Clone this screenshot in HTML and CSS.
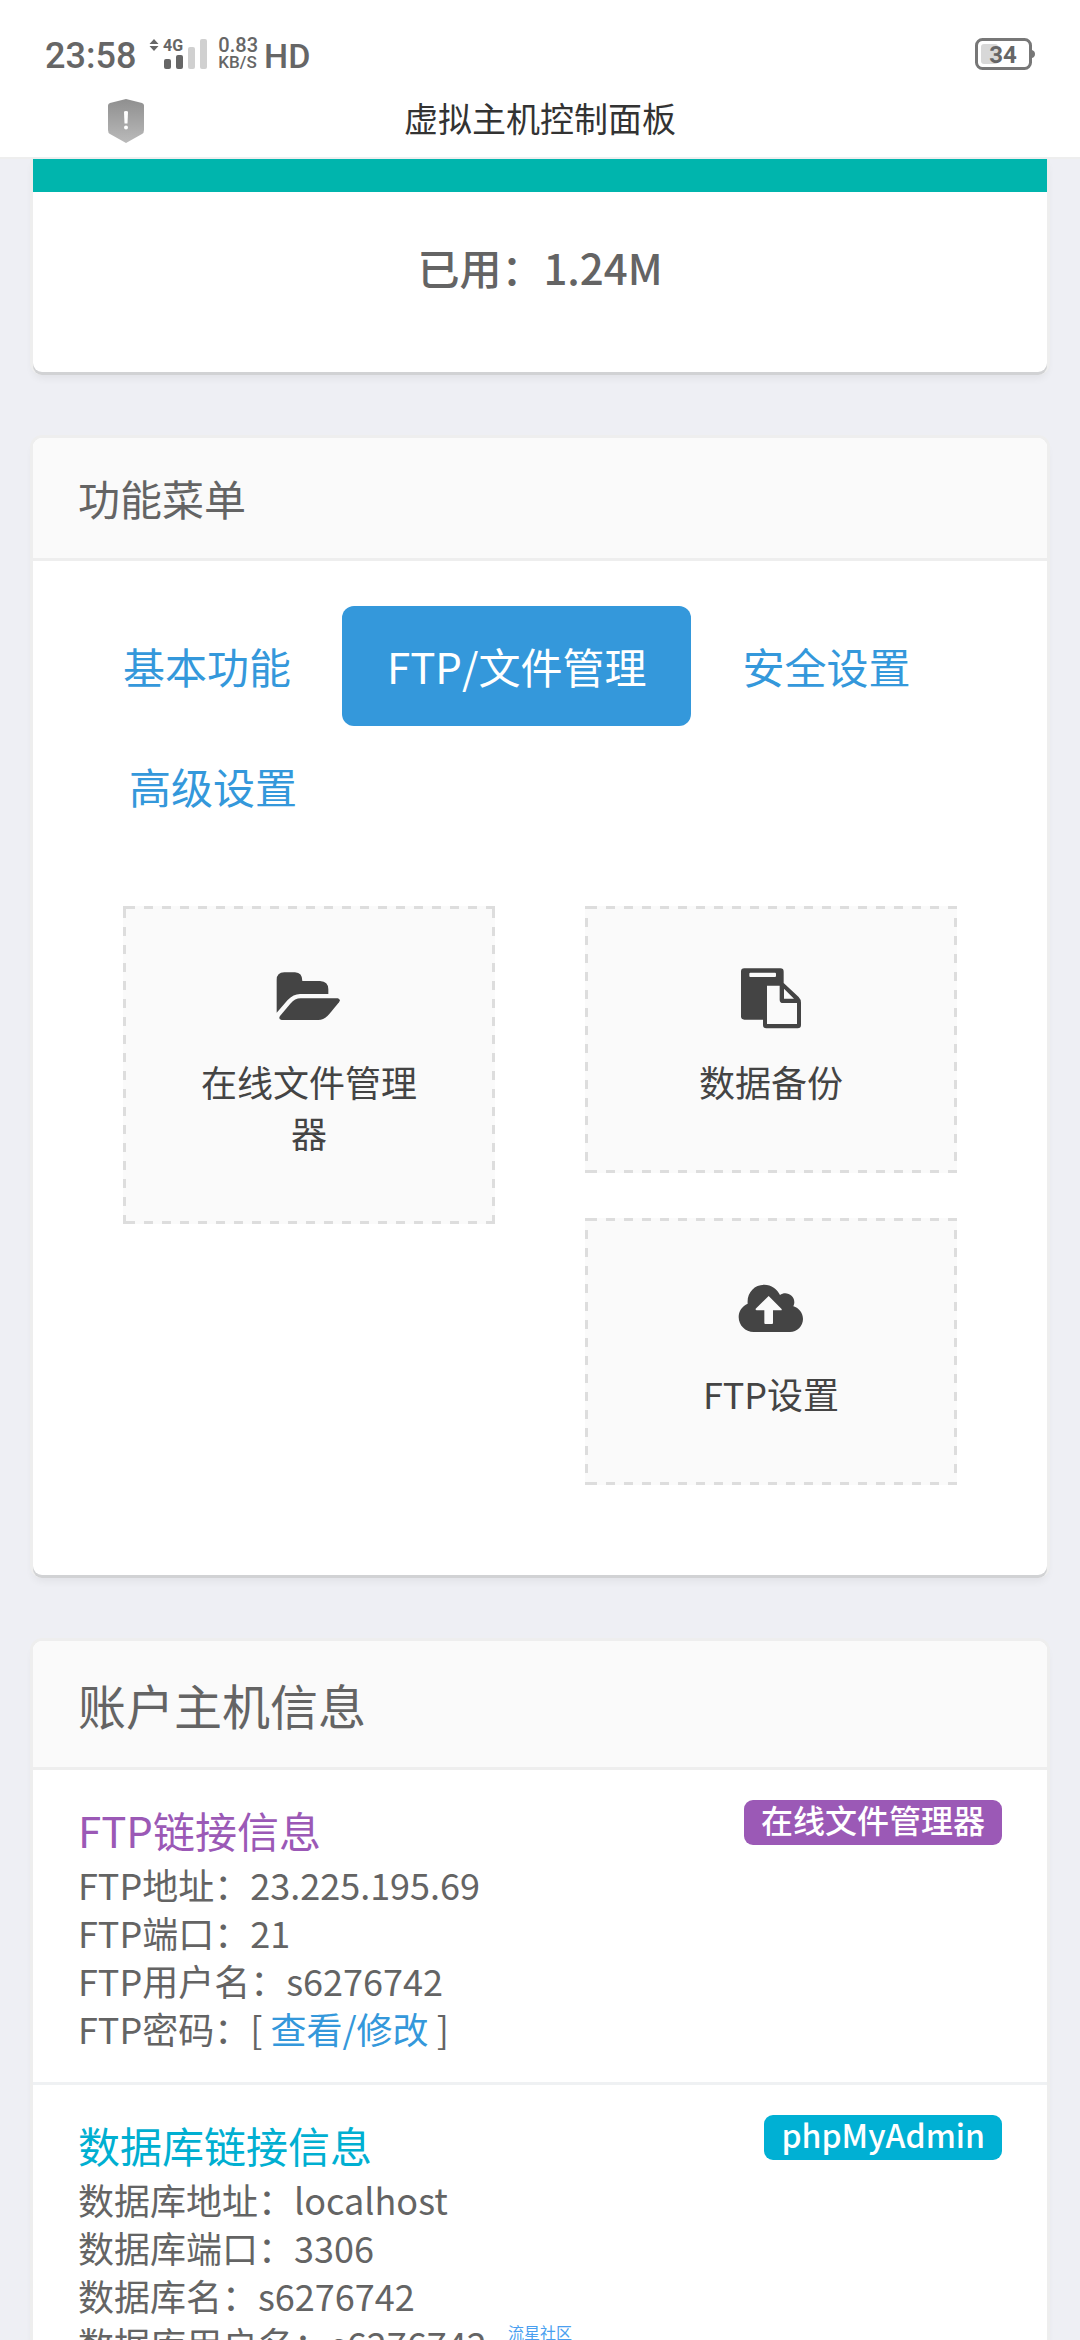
FILE: index.html
```html
<!DOCTYPE html>
<html lang="zh-CN">
<head>
<meta charset="utf-8">
<meta name="viewport" content="width=device-width">
<title>虚拟主机控制面板</title>
<link rel="stylesheet" href="styles.css">
</head>
<body>
<div class="app">
  <header class="topbar">
    <div class="status">
      <span class="status-big">23:58</span>
      <svg class="signal" viewBox="0 0 60 32" aria-hidden="true">
        <path d="M5 1 9.500 6H.5zM5 13 9.500 8H.5z" fill="#666"/>
        <text class="signal-net" x="14" y="13">4G</text>
        <rect x="15" y="21" width="7" height="10" rx="2" fill="#666"/>
        <rect x="27" y="17" width="7" height="14" rx="2" fill="#666"/>
        <rect x="39" y="9" width="7" height="22" rx="2" fill="#d0d0d0"/>
        <rect x="51" y="1" width="7" height="30" rx="2" fill="#d0d0d0"/>
      </svg>
      <span class="speed"><span class="speed-value">0.83</span><span class="speed-unit">KB/S</span></span>
      <span class="status-big status-hd">HD</span>
      <svg class="battery" viewBox="0 0 60 32" role="img" aria-label="34%">
        <rect x="6" y="6" width="17" height="20" rx="3" fill="#d8d8d8"/>
        <rect x="1.500" y="1.500" width="54" height="29" rx="6" fill="none" stroke="#777" stroke-width="3"/>
        <path d="M57 12q3 1 3 4t-3 4z" fill="#777"/>
        <text class="battery-level" x="28" y="25" text-anchor="middle">34</text>
      </svg>
    </div>
    <div class="titlebar">
      <svg class="shield" viewBox="0 -4 36 48" aria-hidden="true">
        <defs><linearGradient id="shade" x2="0" y2="1"><stop stop-color="#8f8f8f"/><stop offset="1" stop-color="#bababa"/></linearGradient></defs>
        <path d="M18 0 34 4q2 .5 2 2.500V31q0 3-2 4L18 44 2 35q-2-1-2-4V6.500Q0 4.500 2 4z" fill="url(#shade)"/>
        <path d="M16 13q0-1 2-1t2 1l-.5 11.500h-3z" fill="#fff"/>
        <circle cx="18" cy="28.500" r="2" fill="#fff"/>
      </svg>
      <h1 class="title">虚拟主机控制面板</h1>
    </div>
  </header>

  <main class="content">
    <section class="card card-usage">
      <div class="usage-bar"></div>
      <p class="usage-text">已用：1.24M</p>
    </section>

    <section class="card">
      <h2 class="card-head">功能菜单</h2>
      <div class="menu">
        <nav>
          <ul class="pills">
            <li><a class="pill" href="#basic">基本功能</a></li>
            <li><a class="pill pill-active" href="#ftp">FTP/文件管理</a></li>
            <li><a class="pill" href="#security">安全设置</a></li>
            <li><a class="pill" href="#advanced">高级设置</a></li>
          </ul>
        </nav>
        <div class="tiles">
          <div class="tile-col">
            <a class="tile tile-tall" href="#files">
              <svg class="tile-icon" viewBox="528 267 198 180" aria-hidden="true">
                <path d="M530 398V300Q530 277 553 277H585Q607 278 607 303H660Q685 304 685 328V342H600Q580 342 563 360Z"/>
                <path d="M602 355H713Q723 357 717 367L688 402Q673 420 655 420H545Q534 418 540 408L571 371Q585 355 602 355Z"/>
              </svg>
              <span>在线文件管理器</span>
            </a>
          </div>
          <div class="tile-col">
            <a class="tile" href="#backup">
              <svg class="tile-icon" viewBox="534 267 198 180" aria-hidden="true">
                <path fill-rule="evenodd" d="M553 265H661Q671 265 671 275V309L716 351Q723 358 723 368V435Q723 445 713 445H619Q609 445 609 435V419H553Q543 419 543 409V275Q543 265 553 265ZM571 278Q568 278 568 281V288Q568 291 571 291H645Q648 291 648 288V281Q648 278 645 278ZM621 317V432H711V369H669Q659 369 659 359V317ZM672 326V356H702Z"/>
              </svg>
              <span>数据备份</span>
            </a>
            <a class="tile" href="#ftp-settings">
              <svg class="tile-icon" viewBox="534 273 198 180" aria-hidden="true">
                <path fill-rule="evenodd" d="M581 426C556 426 536 406 536 381C536 363 547 348 563 341C560 308 583 284 613 284C634 284 652 297 660 315C677 303 703 314 703 337Q703 343 700 349C717 354 729 369 729 387C729 408 711 426 690 426ZM626 318 587 356Q586 361 590 361H613V399Q613 402 616 402H636Q639 402 639 399V361H663Q667 360 664 356Z"/>
              </svg>
              <span>FTP设置</span>
            </a>
          </div>
        </div>
      </div>
    </section>

    <section class="card">
      <h2 class="card-head card-head-large">账户主机信息</h2>
      <div class="info">
        <div class="info-body">
          <h3 class="info-title info-title-ftp">FTP链接信息</h3>
          <p>FTP地址：23.225.195.69</p>
          <p>FTP端口：21</p>
          <p>FTP用户名：s6276742</p>
          <p>FTP密码：[ <a class="link" href="#password">查看/修改</a> ]</p>
        </div>
        <a class="badge badge-ftp" href="#files">在线文件管理器</a>
      </div>
      <div class="info">
        <div class="info-body">
          <h3 class="info-title info-title-db">数据库链接信息</h3>
          <p>数据库地址：localhost</p>
          <p>数据库端口：3306</p>
          <p>数据库名：s6276742</p>
          <p>数据库用户名：s6276742</p>
        </div>
        <a class="badge badge-db" href="#phpmyadmin">phpMyAdmin</a>
      </div>
    </section>
  </main>
  <span class="watermark">流星社区</span>
</div>
</body>
</html>
```
FILE: styles.css
```css
* {
  box-sizing: border-box;
}

body,
h1,
h2,
h3,
p,
ul {
  margin: 0;
  padding: 0;
  font-weight: 400;
}

body {
  background: #eeeff4;
  color: #646464;
  font-family: "Noto Sans CJK SC", sans-serif;
  font-size: 36px;
  line-height: 48px;
}

a {
  color: #3498db;
  text-decoration: none;
}

.app {
  position: relative;
  display: flex;
  flex-direction: column;
  height: 100vh;
  overflow: hidden;
}

.topbar {
  flex: none;
  background: #fff;
  border-bottom: 2px solid #eee;
}

.status {
  display: flex;
  align-items: center;
  height: 80px;
  padding: 28px 45px 0;
  color: #666;
  font-family: Roboto, sans-serif;
  font-weight: 500;
}

.status-big {
  padding-top: 3px;
  font-size: 36px;
}

.signal {
  width: 60px;
  height: 32px;
  margin-left: 13px;
  overflow: visible;
}

.signal-net {
  fill: #666;
  font-size: 16px;
  font-weight: 700;
}

.speed {
  display: flex;
  flex-direction: column;
  margin-left: 9px;
  line-height: 17px;
}

.speed-value {
  font-size: 20px;
}

.speed-unit {
  font-size: 17px;
}

.status-hd {
  margin-left: 6px;
  font-size: 34px;
}

.battery {
  width: 60px;
  height: 32px;
  margin-left: auto;
}

.battery-level {
  fill: #666;
  font-size: 24px;
  font-weight: 700;
}

.titlebar {
  display: grid;
  grid-template-columns: 1fr auto 1fr;
  align-items: center;
  height: 77px;
  padding: 0 108px;
}

.shield {
  width: 36px;
  height: 48px;
}

.title {
  padding-bottom: 1px;
  color: #333;
  font-size: 34px;
}

.content {
  display: flex;
  flex: 1;
  flex-direction: column;
  gap: 66px;
  min-height: 0;
  padding: 0 33px;
  overflow: hidden;
}

.card {
  flex: none;
  background: #fff;
  border-radius: 9px;
  box-shadow: 0 3px 0 #d1d2d4, 0 0 0 3px #eee, 0 6px 9px rgba(0, 0, 0, .06);
}

.card-usage {
  border-radius: 0 0 9px 9px;
}

.usage-bar {
  height: 33px;
  background: #00b5ad;
}

.usage-text {
  padding: 43px 45px 74px;
  font-size: 42px;
  font-weight: 500;
  line-height: 63px;
  text-align: center;
}

.card-head {
  padding: 30px 45px;
  background: #fafafa;
  border-bottom: 3px solid #eee;
  border-radius: 9px 9px 0 0;
  font-size: 42px;
  line-height: 60px;
}

.card-head-large {
  font-size: 48px;
  line-height: 66px;
}

.menu {
  padding: 45px;
}

.pills {
  display: flex;
  flex-wrap: wrap;
  list-style: none;
}

.pills li + li {
  margin-left: 6px;
}

.pill {
  display: block;
  padding: 30px 45px;
  border-radius: 12px;
  font-size: 42px;
  font-kerning: none;
  line-height: 60px;
}

.pill-active {
  background: #3498db;
  color: #fff;
}

.tiles {
  display: grid;
  grid-template-columns: 1fr 1fr;
  gap: 90px;
  padding: 60px 45px 45px;
}

.tile-col {
  display: flex;
  flex-direction: column;
  gap: 45px;
}

/* Dashed outline: 9px dashes, 9px gaps */
.tile {
  --dash-start: 12px;
  --dash-x: linear-gradient(90deg, #ddd 50%, transparent 50%);
  --dash-y: linear-gradient(#ddd 50%, transparent 50%);
  --corner: linear-gradient(#ddd, #ddd);
  display: flex;
  flex-direction: column;
  align-items: center;
  gap: 27px;
  padding: 63px 63px 66px;
  background:
    var(--corner) left top / 3px 3px no-repeat,
    var(--corner) left bottom / 3px 3px no-repeat,
    var(--dash-x) 3px top / 18px 3px repeat-x,
    var(--dash-x) 3px bottom / 18px 3px repeat-x,
    var(--dash-y) left var(--dash-start) / 3px 18px repeat-y,
    var(--dash-y) right var(--dash-start) / 3px 18px repeat-y,
    #fafafa;
  color: #444;
  line-height: 51px;
  text-align: center;
}

.tile-tall {
  --dash-start: 3px;
}

.tile-icon {
  width: 66px;
  height: 60px;
  overflow: visible;
  fill: #444;
}

.info {
  display: flex;
  align-items: flex-start;
  justify-content: space-between;
  padding: 30px 45px;
}

.info + .info {
  border-top: 3px solid #eff1f3;
}

.info-title {
  font-size: 42px;
  line-height: 60px;
}

.info-title-ftp {
  color: #9b59b6;
}

.info-title-db {
  color: #00afd1;
}

.badge {
  padding: 0 17px 6px;
  border-radius: 9px;
  color: #fff;
  font-size: 32px;
  font-weight: 500;
  line-height: 39px;
}

.badge-ftp {
  background: #9b59b6;
}

.badge-db {
  background: #00b0d4;
}

.watermark {
  position: absolute;
  bottom: 0;
  left: 50%;
  transform: translateX(-50%);
  color: #4a9ff0;
  font-size: 16px;
  line-height: 16px;
}
```
